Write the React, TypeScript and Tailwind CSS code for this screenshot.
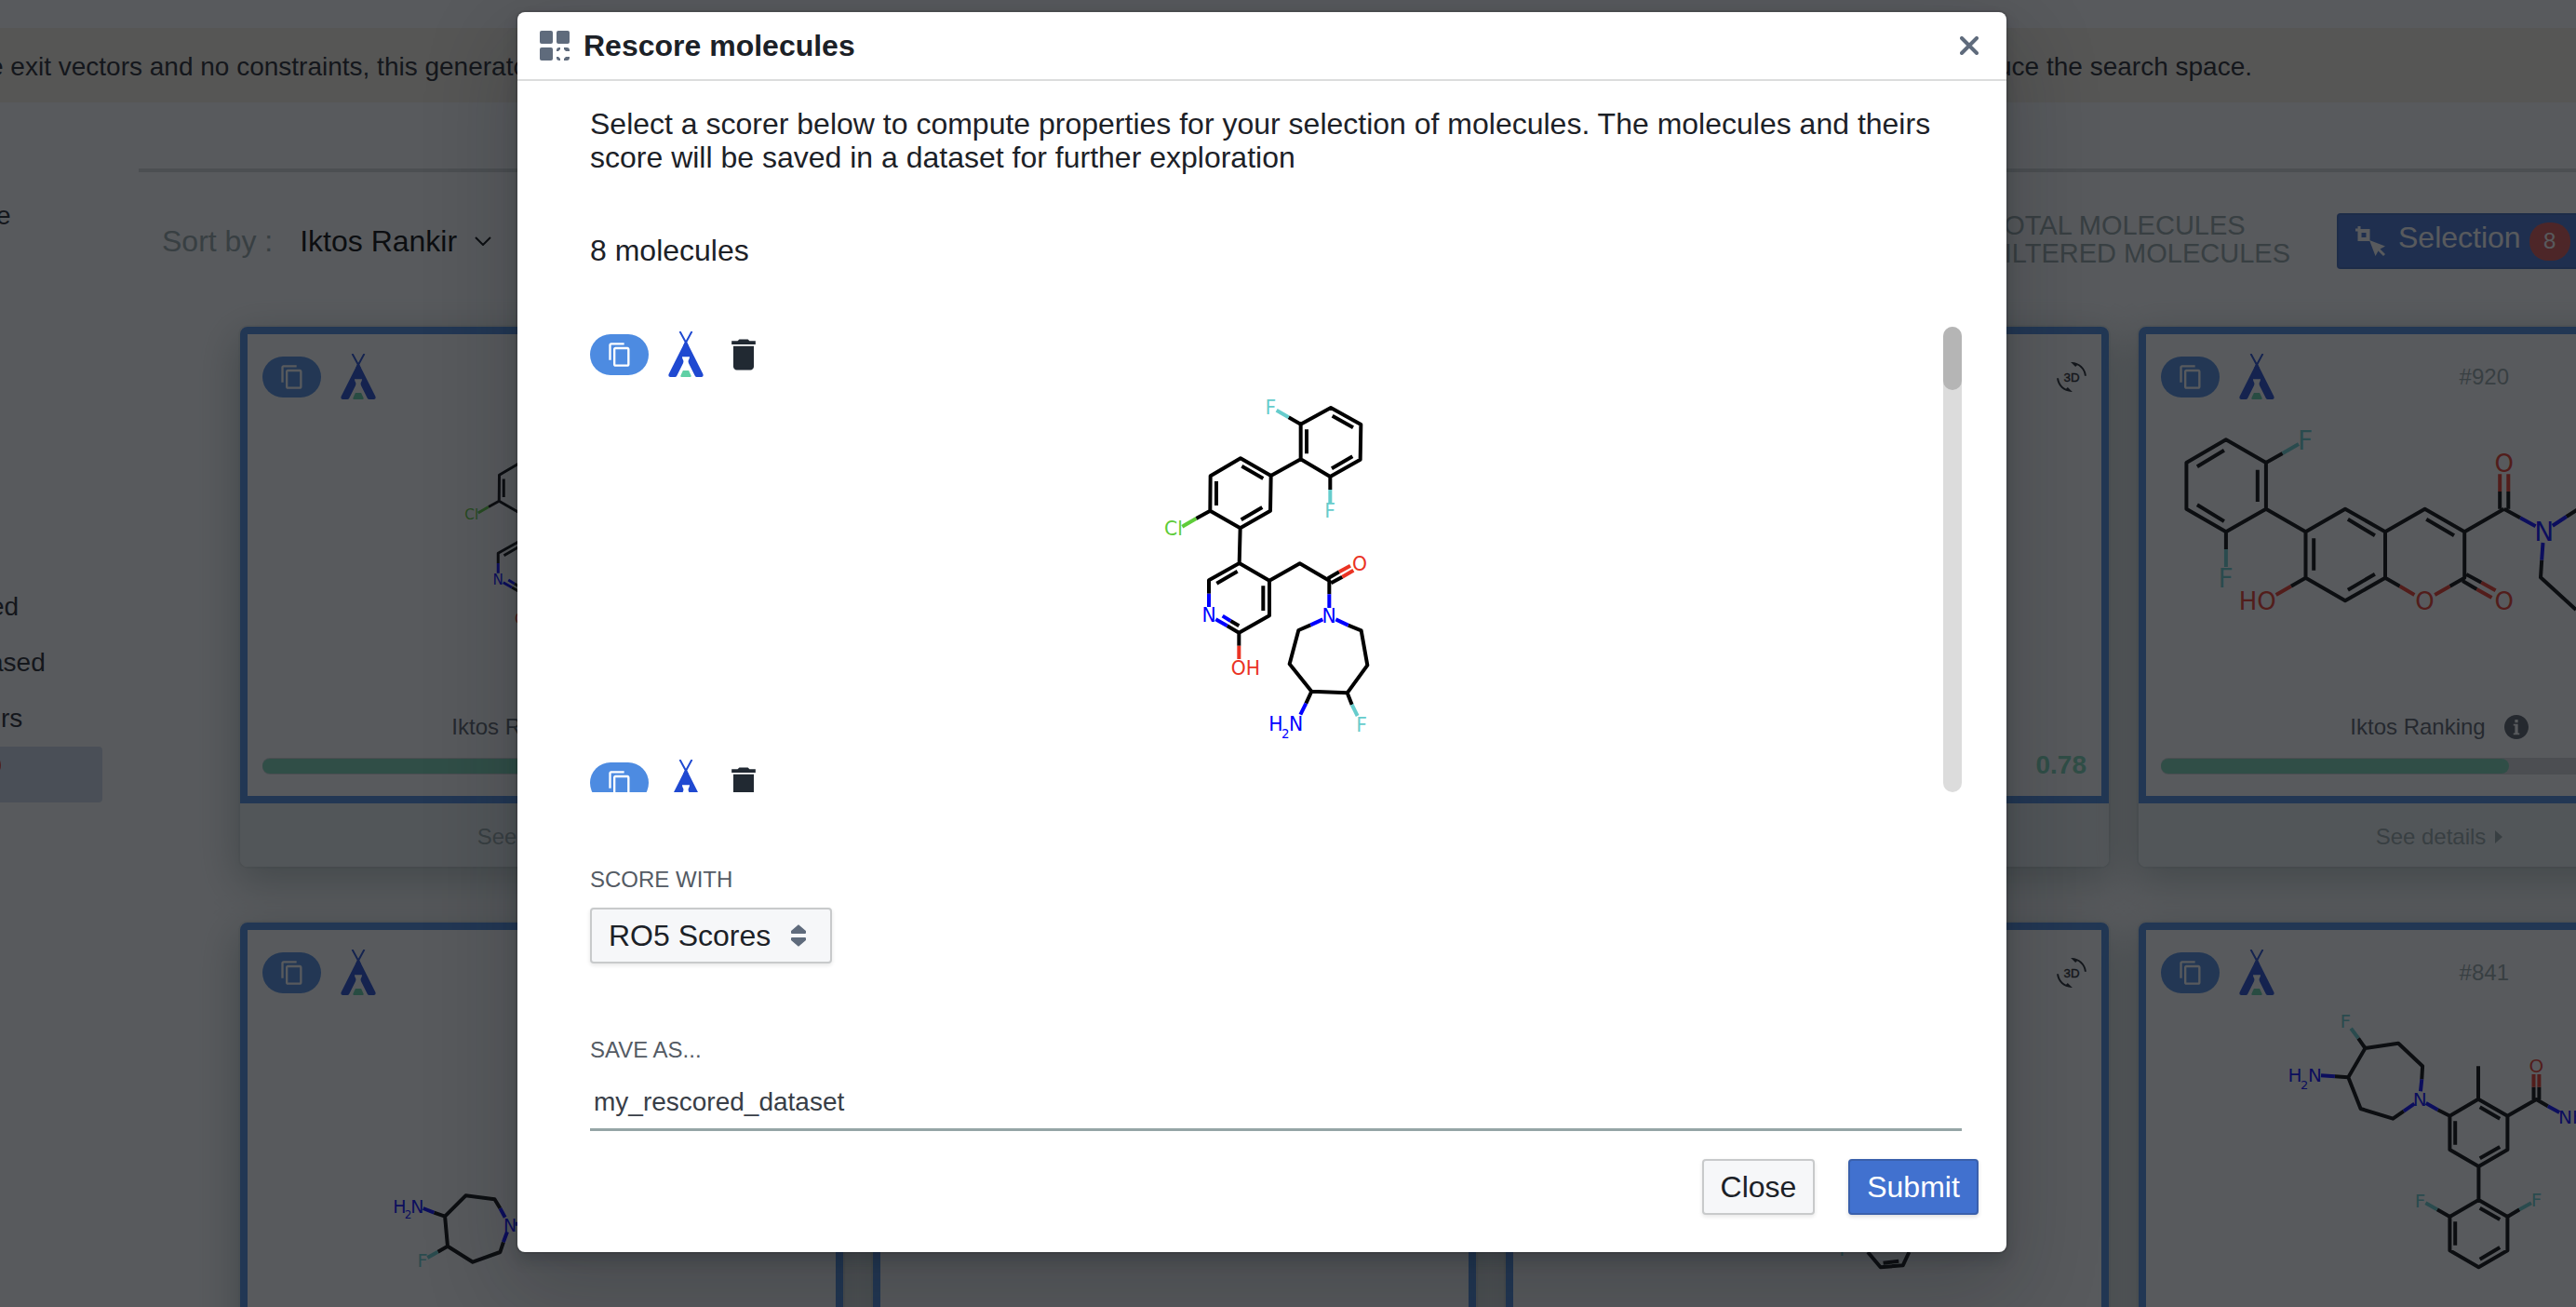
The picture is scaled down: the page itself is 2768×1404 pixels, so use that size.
import { MdContentCopy, MdDelete } from "react-icons/md";

const C = "#000000";
const N = "#0000ff";
const O = "#ea3323";
const F = "#66cccc";
const CL = "#5ecc3a";

interface Label {
  x: number;
  y: number;
  t: string;
  c: string;
  s?: number;
}

interface MoleculeData {
  stroke: number;
  size: number;
  bonds: [string, string][];
  labels: Label[];
}

const PYRIDINOL: MoleculeData = {
  stroke: 12,
  size: 61,
  bonds: [
    [
      C,
      "M554 145L593 167L690 114L787 168L785 281L688 336L593 280V167M612 262V184M695 140L762 178M760 271L693 310M688 336V378M593 280L497 333L399 277L302 334L301 446L398 502L495 446L497 333M472 342L403 302M321 351V429M401 475L469 435M301 446L256 471M398 502L395 615L297 670V713M389 641L322 680M395 615L492 671V784L394 839L356 817M472 768V688M394 817L367 801M394 839V881M492 671L590 616L685 671V715M681 664L717 643M691 679L727 659M625 814L586 831L557 940L628 1028L743 1033L808 944L788 832L746 815M628 1028L610 1067M743 1033L758 1071",
    ],
    [F, "M515 122L554 145M688 378V420M758 1071L776 1107"],
    [CL, "M256 471L211 497"],
    [N, "M297 713V756M319 796L356 817M341 785L367 801M685 715V759M664 796L625 814M746 815L706 796M610 1067L592 1103"],
    [O, "M394 881V924M717 643L753 623M727 659L763 638"],
  ],
  labels: [
    { x: 496, y: 112, t: "F", c: F },
    { x: 687, y: 447, t: "F", c: F },
    { x: 183, y: 504, t: "Cl", c: CL },
    { x: 297, y: 783, t: "N", c: N },
    { x: 415, y: 952, t: "OH", c: O },
    { x: 783, y: 618, t: "O", c: O },
    { x: 684, y: 786, t: "N", c: N },
    { x: 513, y: 1132, t: "H", c: N },
    { x: 544, y: 1164, t: "2", c: N, s: 40 },
    { x: 578, y: 1132, t: "N", c: N },
    { x: 789, y: 1135, t: "F", c: F },
  ],
};

const COUMARIN: MoleculeData = {
  stroke: 4,
  size: 28,
  bonds: [
    [
      C,
      "M152.7 47L134.9 57L91.9 32.3L49.4 57V106.7L91.9 131.3L134.9 106.7V57M60.9 61.3L89.9 43.7M125.8 64.7V99M60.9 102.3L89.9 120M91.9 131.3V150M134.9 106.7L177.5 131.3L220 106.7L263 131.3V180.7L220 205.3L177.5 180.7V131.3M222.9 117.7L251.9 135.3M251.9 176.7L222.9 193.7M186.2 138.3V172.7M177.5 180.7L161.8 189.7M263 131.3L305.6 106.7L348.2 131.3V180.7L332.5 189.7M307.2 117.7L337 135.3M263 180.7L278.7 189.7M350.2 177L366.3 185.7M346.1 184L361.4 193M348.2 131.3L390.7 106.7M386.2 106.7V88M395.3 106.7V88M390.7 106.7L408.1 116.3M457.7 115L473 105M431.2 161.7L430 180.3L468 215",
    ],
    [F, "M152.7 47L170 37M91.9 150V169"],
    [O, "M161.8 189.7L145.7 199M278.7 189.7L294.4 199M332.5 189.7L316.3 199M366.3 185.7L381.6 194.3M361.4 193L377.5 202M386.2 88V69.3M395.3 88V69.3"],
    [N, "M408.1 116.3L424.6 125.3M442.8 124.7L457.7 115M432.5 143L431.2 161.7"],
  ],
  labels: [
    { x: 177.1, y: 32.5, t: "F", c: F },
    { x: 91.5, y: 180.5, t: "F", c: F },
    { x: 125.8, y: 205.3, t: "HO", c: O, s: 26 },
    { x: 305.6, y: 205.3, t: "O", c: O, s: 26 },
    { x: 390.7, y: 205.3, t: "O", c: O, s: 26 },
    { x: 390.7, y: 57.3, t: "O", c: O, s: 26 },
    { x: 433.7, y: 131, t: "N", c: N },
  ],
};

const BENZAMIDE: MoleculeData = {
  stroke: 4,
  size: 20,
  bonds: [
    [
      C,
      "M234.1 35.3L241.5 46L277.1 40.7L303.1 65.3L302.3 79.3M282.9 113.7L271.3 121.7L236.6 111L223.3 77.3L241.5 46M223.3 77.3L208.9 76.3M319.6 112.3L332.4 118.7L363 100.7L394.4 118.7V155L363.4 173L332.4 155V118.7M338.2 124.3V149.7M364.7 109.3L386.2 121.7M386.2 152L364.7 164.3M363 100.7V65.3M394.4 118.7L425.4 101L437.8 108.3M422.5 101V87.7M428.4 101V87.7M363.4 173V209L394.4 227V263.3L363.4 281.3L332.4 263.3V227L363.4 209M364.7 217.7L386.2 230M386.2 260L364.7 272.7M338.2 232.3V257.7M332.4 227L318.8 219.3M394.4 227L407.3 219.3",
    ],
    [F, "M226.2 24.7L234.1 35.3M318.8 219.3L306.4 212.3M407.3 219.3L420 212.3"],
    [N, "M302.3 79.3L301 92.3M294.4 105.7L282.9 113.7M208.9 76.3L194 75.3M306.8 105L319.6 112.3M437.8 108.3L450.2 115"],
    [O, "M422.5 87.7V74M428.4 87.7V74"],
  ],
  labels: [
    { x: 220.3, y: 16.3, t: "F", c: F },
    { x: 300.2, y: 101, t: "N", c: N },
    { x: 165.9, y: 75, t: "H", c: N },
    { x: 176.2, y: 85, t: "2", c: N, s: 13 },
    { x: 187.4, y: 75, t: "N", c: N },
    { x: 425.4, y: 65, t: "O", c: O },
    { x: 464, y: 119.3, t: "NH", c: N },
    { x: 300.4, y: 209.3, t: "F", c: F },
    { x: 425.4, y: 209, t: "F", c: F },
  ],
};

const AZEPANE: MoleculeData = {
  stroke: 4,
  size: 19,
  bonds: [
    [C, "M206.4 222.7L218.1 226.7L240.4 204.3L271.5 208.3L277.4 218M280.9 254.3L277.4 265L248 275.7L221 258.7L218.1 226.7M221 258.7L210.5 264.7"],
    [N, "M194.7 218L206.4 222.7M277.4 218L282.7 227.7M285 243.3L280.9 254.3M293.8 234.7H312"],
    [F, "M210.5 264.7L199.4 271"],
  ],
  labels: [
    { x: 169.5, y: 216, t: "H", c: N },
    { x: 178.6, y: 225, t: "2", c: N, s: 12 },
    { x: 188.4, y: 216, t: "N", c: N },
    { x: 288, y: 235.7, t: "N", c: N },
    { x: 194, y: 274.3, t: "F", c: F },
  ],
};

const FRAGMENT: MoleculeData = {
  stroke: 4,
  size: 20,
  bonds: [[C, "M387 265L400.7 281.3L424.7 279.3L431.4 265M403.6 276.7L420.3 274.7"]],
  labels: [{ x: 362, y: 262, t: "F", c: F }],
};

function Molecule({ data }: { data: MoleculeData }) {
  return (
    <g>
      {data.bonds.map(([color, d]) => (
        <path key={d} d={d} stroke={color} strokeWidth={data.stroke} fill="none" strokeLinejoin="round" />
      ))}
      {data.labels.map((l, i) => {
        const size = l.s ?? data.size;
        return (
          <text key={i} x={l.x} y={l.y + size * 0.365} fontSize={size} fill={l.c} textAnchor="middle" className="font-['DejaVu_Sans',sans-serif]">
            {l.t}
          </text>
        );
      })}
    </g>
  );
}

function CopyPill() {
  return (
    <span className="flex h-11 w-[63px] shrink-0 items-center justify-center rounded-full bg-[#4d8be1] text-white">
      <MdContentCopy size={28} />
    </span>
  );
}

function TipiIcon() {
  return (
    <svg width="38" height="49" viewBox="0 0 113 148" className="shrink-0" aria-hidden>
      <path d="M37 0L62 46M76 0L51 46" stroke="#1f49d1" strokeWidth="6" />
      <path
        d="M56.5 28L112 138Q115 148 107 148H92Q88 148 86 144L66 104Q62 97 67 90L69 82H44L46 90Q51 97 47 104L27 144Q25 148 21 148H6Q-2 148 1 138Z"
        fill="#1f49d1"
      />
      <path d="M47 127H66L73 143V148H40V143Z" fill="#5fd0a5" />
    </svg>
  );
}

function RotateIcon() {
  return (
    <svg width="32" height="32" viewBox="0 0 24 24" className="shrink-0" fill="#1c2127" aria-hidden>
      <path d="M7.52 21.48C4.25 19.94 1.91 16.76 1.55 13H.05C.56 19.16 5.71 24 12 24l.66-.03-3.81-3.81-1.33 1.32zM12 0l-.66.03 3.81 3.81 1.33-1.33c3.27 1.55 5.61 4.72 5.96 8.48h1.5C23.44 4.84 18.29 0 12 0z" />
      <text x="12" y="15.6" fontSize="10" textAnchor="middle" stroke="#1c2127" strokeWidth="0.3">
        3D
      </text>
    </svg>
  );
}

function GridIcon() {
  return (
    <svg width="32" height="32" viewBox="0 0 32 32" fill="#5f6b7c" aria-hidden>
      <rect width="14" height="14" rx="2" />
      <rect x="18" width="14" height="14" rx="2" />
      <rect y="18" width="14" height="14" rx="2" />
      <path d="M18 22V21Q18 18 21 18H22V20L20 22ZM28 22L26 20V18H29Q32 18 32 21V22ZM18 28H20L22 30V32H21Q18 32 18 29ZM32 28V29Q32 32 29 32H26V30L28 28Z" />
    </svg>
  );
}

function SelectIcon() {
  return (
    <svg width="32" height="32" viewBox="0 0 32 32" fill="none" aria-hidden>
      <rect x="4.5" y="5" width="9" height="9" stroke="white" strokeWidth="4" />
      <path d="M4 0V4M0 4H4" stroke="white" strokeWidth="3" />
      <path d="M15 15L32 21.5L26.5 24.5L32 30L30 32L24.5 26.5L21.5 32Z" fill="white" />
    </svg>
  );
}

function InfoIcon() {
  return (
    <svg width="26" height="26" viewBox="0 0 16 16" aria-hidden>
      <path
        fill="#555b66"
        fillRule="evenodd"
        d="M8 0C3.58 0 0 3.58 0 8s3.58 8 8 8 8-3.58 8-8-3.58-8-8-8zM7 3h2v2H7V3zm3 10H6v-1h1V7H6V6h3v6h1v1z"
      />
    </svg>
  );
}

interface CardProps {
  id?: string;
  molecule?: MoleculeData;
  transform?: string;
  score?: string;
  fill?: number;
}

function MoleculeCard({ id, molecule, transform, score = "0.78", fill = 78 }: CardProps) {
  return (
    <div className="h-[580px] w-[648px] shrink-0 rounded-lg bg-white shadow-[0_0_0_2px_rgba(149,165,166,0.15),0_14px_44px_4px_rgba(80,105,100,0.38)]">
      <div className="h-[512px] rounded-t-lg border-8 border-[#4a8ae0] pt-[21px]">
        <div className="flex h-[49px] items-center px-4">
          <CopyPill />
          <div className="ml-[21px] flex">
            <TipiIcon />
          </div>
          <span className="ml-auto mr-[194px] text-2xl text-[#95a5a6]">{id}</span>
          <RotateIcon />
        </div>
        <svg width="632" height="290" viewBox="6 0 632 290" className="mt-[11px]">
          {molecule && (
            <g transform={transform}>
              <Molecule data={molecule} />
            </g>
          )}
        </svg>
        <div className="mt-[37px] flex h-7 items-center justify-center gap-5 pr-0.5 text-2xl text-[#555b66]">
          Iktos Ranking
          <InfoIcon />
        </div>
        <div className="mt-3 flex h-8 items-center gap-9 px-4">
          <div className="flex h-[18px] grow items-center rounded-lg bg-[#d5d7db]">
            <div className="h-4 rounded-lg bg-[#7ad5b4]" style={{ width: `${fill}%` }} />
          </div>
          <span className="pb-0.5 text-[28px] font-bold text-[#7ad5b4]">{score}</span>
        </div>
      </div>
      <div className="flex h-[68px] items-center justify-center gap-2.5 rounded-b-lg bg-[#ecf1f1] pt-1 pr-0.5 text-2xl text-[#95a5a6]">
        See details
        <svg width="8" height="14" viewBox="0 0 8 14" fill="currentColor" aria-hidden>
          <path d="M0 0L8 7L0 14Z" />
        </svg>
      </div>
    </div>
  );
}

const CARD_ROWS: CardProps[][] = [
  [
    { molecule: PYRIDINOL, transform: "translate(201 -13.3) scale(0.25)" },
    {},
    {},
    { id: "#920", molecule: COUMARIN, fill: 73.5 },
  ],
  [{ molecule: AZEPANE }, {}, { molecule: FRAGMENT }, { id: "#841", molecule: BENZAMIDE }],
];

const SIDEBAR_ITEMS = [
  { text: "e", offset: "-ml-1" },
  { text: "", offset: "" },
  { text: "", offset: "" },
  { text: "", offset: "" },
  { text: "", offset: "" },
  { text: "", offset: "" },
  { text: "", offset: "" },
  { text: "ed", offset: "-ml-[11px]" },
  { text: "ased", offset: "-ml-3" },
  { text: "rs", offset: "ml-px" },
];

function Sidebar() {
  return (
    <div className="w-[149px] shrink-0 pt-[92px] text-[28px] text-[#1c2127]">
      {SIDEBAR_ITEMS.map((item, i) => (
        <div key={i} className="flex h-[60px] items-center">
          <span className={item.offset}>{item.text}</span>
        </div>
      ))}
      <div className="flex h-[60px] w-[110px] items-start rounded-r bg-[#cfdbea] pt-2">
        <span className="-ml-[23px] size-6 rounded-full bg-[#db3737]" />
      </div>
    </div>
  );
}

function Toolbar() {
  return (
    <div className="flex h-[148px] items-center pl-[25px]">
      <div className="flex w-[1962px] shrink-0 items-center text-[32px]">
        <span className="text-[#95a5a6]">Sort by :</span>
        <span className="ml-[29px] text-black">Iktos Rankir</span>
        <svg width="18" height="10" viewBox="0 0 18 10" fill="none" stroke="black" strokeWidth="2" className="ml-[19px]" aria-hidden>
          <path d="M1 1L9 9L17 1" />
        </svg>
      </div>
      <div className="w-[375px] shrink-0 pb-1 text-[29px] leading-[30px] whitespace-nowrap text-[#95a5a6]">
        TOTAL MOLECULES
        <br />
        FILTERED MOLECULES
      </div>
      <div className="flex h-[60px] w-[320px] shrink-0 items-center rounded-[4px] bg-[#4171cf] pl-5 text-white shadow-[inset_0_0_0_2px_rgba(17,20,24,0.12)]">
        <SelectIcon />
        <span className="ml-3.5 pb-2 text-[32px]">Selection</span>
        <span className="ml-[9px] flex h-[41px] w-11 items-center justify-center rounded-[20px] bg-[#d9534f] text-2xl">8</span>
      </div>
    </div>
  );
}

function ListRow() {
  return (
    <div className="h-[460px] pt-[5px]">
      <div className="flex h-[49px] items-center">
        <CopyPill />
        <div className="ml-[21px] flex">
          <TipiIcon />
        </div>
        <MdDelete size={44} className="ml-[21px] text-[#212932]" />
      </div>
      <div className="flex justify-center pr-0.5">
        <svg width="320" height="406" viewBox="0 15 960 1218">
          <Molecule data={PYRIDINOL} />
        </svg>
      </div>
    </div>
  );
}

function RescoreDialog() {
  return (
    <div className="h-[1332px] w-[1600px] rounded-lg bg-white text-[#1c2127] shadow-[0_0_0_2px_rgba(17,20,24,0.1),0_8px_16px_rgba(17,20,24,0.2),0_36px_92px_12px_rgba(17,20,24,0.2)]">
      <div className="flex h-[74px] items-center border-b-2 border-[#dcdddd] pl-6 pr-[30px]">
        <GridIcon />
        <h2 className="ml-[15px] text-[32px] font-bold">Rescore molecules</h2>
        <svg width="20" height="20" viewBox="0 0 20 20" stroke="#5f6b7c" strokeWidth="4" strokeLinecap="round" className="ml-auto" aria-hidden>
          <path d="M2 2L18 18M18 2L2 18" />
        </svg>
      </div>

      <div className="pl-[78px] pr-12 pt-7">
        <p className="text-[32px] leading-9">
          Select a scorer below to compute properties for your selection of molecules. The molecules and theirs
          <br />
          score will be saved in a dataset for further exploration
        </p>
        <p className="mt-16 text-[32px] leading-9">8 molecules</p>

        <div className="mt-16 flex h-[500px]">
          <div className="grow overflow-hidden">
            <ListRow />
            <ListRow />
          </div>
          <div className="w-5 rounded-[10px] bg-[#dcdcdc]">
            <div className="h-[68px] rounded-[10px] bg-[#b5b5b5]" />
          </div>
        </div>

        <div className="mt-20 text-2xl leading-7 text-[#545b64]">SCORE WITH</div>
        <button className="mt-4 flex h-[60px] w-[260px] items-center rounded-[4px] border-2 border-[#c8cacb] bg-[#f6f7f9] pl-[18px] text-[32px] shadow-[0_2px_4px_rgba(17,20,24,0.1)]">
          RO5 Scores
          <svg width="16" height="24" viewBox="0 0 16 24" fill="#5f6b7c" stroke="#5f6b7c" strokeWidth="2" strokeLinejoin="round" className="ml-[22px]" aria-hidden>
            <path d="M8 1.4L15 7.5V9H1V7.5ZM1 15H15V16.5L8 22.6L1 16.5Z" />
          </svg>
        </button>

        <div className="mt-[79px] text-2xl leading-7 text-[#545b64]">SAVE AS...</div>
        <div className="mt-3.5 flex h-[59px] items-center border-b-[3px] border-[#95a5a6] pl-1 text-[28px] text-[#383e47]">
          my_rescored_dataset
        </div>
      </div>

      <div className="mt-[30px] flex justify-end gap-9 pr-[30px] text-[32px]">
        <button className="h-[60px] w-[121px] rounded-[4px] border-2 border-[#c8cacb] bg-[#f6f7f9] shadow-[0_2px_4px_rgba(17,20,24,0.1)]">
          Close
        </button>
        <button className="h-[60px] w-[140px] rounded-[4px] border-2 border-[#3a60ac] bg-[#4171cf] text-white shadow-[0_2px_4px_rgba(17,20,24,0.15)]">
          Submit
        </button>
      </div>
    </div>
  );
}

export default function App() {
  return (
    <div className="relative h-[1404px] w-[2768px] overflow-hidden bg-white font-['Liberation_Sans',Arial,sans-serif] leading-none">
      <div className="mt-[30px] flex h-20 items-center justify-between bg-[#f7f0e3] pr-[348px] pt-1 text-[28px] whitespace-nowrap text-[#1c2127]">
        <span className="-ml-3">e exit vectors and no constraints, this generator</span>
        <span>reduce the search space.</span>
      </div>

      <div className="flex">
        <Sidebar />
        <div className="w-[2619px] shrink-0 pt-[71px]">
          <div className="h-1 bg-[#d5dbdb]" />
          <Toolbar />
          <div className="mt-[18px] flex flex-col gap-[60px] pl-[109px]">
            {CARD_ROWS.map((row, i) => (
              <div key={i} className="flex gap-8">
                {row.map((card, j) => (
                  <MoleculeCard key={j} {...card} />
                ))}
              </div>
            ))}
          </div>
        </div>
      </div>

      {/* Backdrop */}
      <div className="absolute inset-0 flex items-start justify-center bg-[#111418]/70 pr-14 pt-[13px]">
        <RescoreDialog />
      </div>
    </div>
  );
}
